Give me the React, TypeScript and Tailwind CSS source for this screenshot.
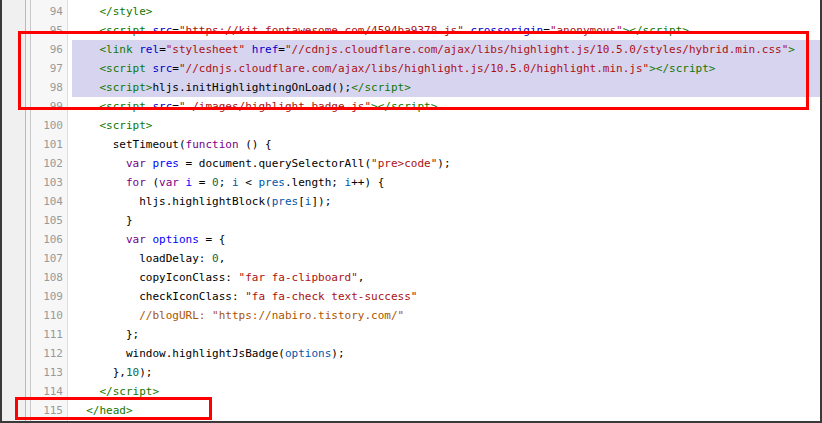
import React from 'react'

type Seg = [string, string]

const TAG = 'text-[#117700]'
const ATT = 'text-[#0000cc]'
const STR = 'text-[#aa1111]'
const KW = 'text-[#770088]'
const DEF = 'text-[#0000ff]'
const V2 = 'text-[#0055aa]'
const NUM = 'text-[#116644]'
const COM = 'text-[#aa5500]'
const TXT = 'text-[#000000]'

const lines: { no: number, segs: Seg[], selected?: boolean }[] = [
    { no: 94, segs: [[TXT, '    '], [TAG, '</style>']] },
    {
        no: 95, segs: [
            [TXT, '    '], [TAG, '<script '], [ATT, 'src'], [TXT, '='],
            [STR, '"https://kit.fontawesome.com/4594ba9378.js"'], [TXT, ' '],
            [ATT, 'crossorigin'], [TXT, '='], [STR, '"anonymous"'], [TAG, '></script>'],
        ]
    },
    {
        no: 96, selected: true, segs: [
            [TXT, '    '], [TAG, '<link '], [ATT, 'rel'], [TXT, '='], [STR, '"stylesheet"'], [TXT, ' '],
            [ATT, 'href'], [TXT, '='],
            [STR, '"//cdnjs.cloudflare.com/ajax/libs/highlight.js/10.5.0/styles/hybrid.min.css"'], [TAG, '>'],
        ]
    },
    {
        no: 97, selected: true, segs: [
            [TXT, '    '], [TAG, '<script '], [ATT, 'src'], [TXT, '='],
            [STR, '"//cdnjs.cloudflare.com/ajax/libs/highlight.js/10.5.0/highlight.min.js"'], [TAG, '></script>'],
        ]
    },
    {
        no: 98, selected: true, segs: [
            [TXT, '    '], [TAG, '<script>'], [TXT, 'hljs.initHighlightingOnLoad();'], [TAG, '</script>'],
        ]
    },
    {
        no: 99, segs: [
            [TXT, '    '], [TAG, '<script '], [ATT, 'src'], [TXT, '='],
            [STR, '"./images/highlight.badge.js"'], [TAG, '></script>'],
        ]
    },
    { no: 100, segs: [[TXT, '    '], [TAG, '<script>']] },
    { no: 101, segs: [[TXT, '      setTimeout('], [KW, 'function'], [TXT, ' () {']] },
    {
        no: 102, segs: [
            [TXT, '        '], [KW, 'var'], [TXT, ' '], [DEF, 'pres'], [TXT, ' = document.querySelectorAll('],
            [STR, '"pre>code"'], [TXT, ');'],
        ]
    },
    {
        no: 103, segs: [
            [TXT, '        '], [KW, 'for'], [TXT, ' ('], [KW, 'var'], [TXT, ' '], [DEF, 'i'], [TXT, ' = '],
            [NUM, '0'], [TXT, '; '], [V2, 'i'], [TXT, ' < '], [V2, 'pres'], [TXT, '.length; '], [V2, 'i'],
            [TXT, '++) {'],
        ]
    },
    {
        no: 104, segs: [
            [TXT, '          hljs.highlightBlock('], [V2, 'pres'], [TXT, '['], [V2, 'i'], [TXT, ']);'],
        ]
    },
    { no: 105, segs: [[TXT, '        }']] },
    { no: 106, segs: [[TXT, '        '], [KW, 'var'], [TXT, ' '], [DEF, 'options'], [TXT, ' = {']] },
    { no: 107, segs: [[TXT, '          loadDelay: '], [NUM, '0'], [TXT, ',']] },
    { no: 108, segs: [[TXT, '          copyIconClass: '], [STR, '"far fa-clipboard"'], [TXT, ',']] },
    { no: 109, segs: [[TXT, '          checkIconClass: '], [STR, '"fa fa-check text-success"']] },
    { no: 110, segs: [[TXT, '          '], [COM, '//blogURL: "https://nabiro.tistory.com/"']] },
    { no: 111, segs: [[TXT, '        };']] },
    { no: 112, segs: [[TXT, '        window.highlightJsBadge('], [V2, 'options'], [TXT, ');']] },
    { no: 113, segs: [[TXT, '      },'], [NUM, '10'], [TXT, ');']] },
    { no: 114, segs: [[TXT, '    '], [TAG, '</script>']] },
    { no: 115, segs: [[TXT, '  '], [TAG, '</head>']] },
]

export default function App() {
    return (
        <div className="relative flex w-[822px] h-[423px] overflow-hidden bg-white border-l-2 border-r-2 border-b-2 border-[#3a3a3a] font-['DejaVu_Sans_Mono',monospace] text-[11px]">
            <div className="w-[24px] shrink-0 bg-[#f0f0f0] border-r border-[#b8b8b8]" />
            <div className="w-[5px] shrink-0 bg-[#f4f4f4] border-r border-[#c8c8c8]" />
            <div className="w-[37px] shrink-0 bg-[#f7f7f7] border-r border-[#dddddd] pt-[2px]">
                {lines.map(line => (
                    <div key={line.no} className="h-[19px] leading-[19px] text-right pr-[4px] text-[#999999]">
                        {line.no}
                    </div>
                ))}
            </div>
            <div className="flex-1 pl-[4px] pt-[2px]">
                {lines.map(line => (
                    <div
                        key={line.no}
                        className={`h-[19px] leading-[19px] whitespace-pre pl-[1px] ${line.selected ? 'bg-[#d7d4f0]' : ''}`}
                    >
                        {line.segs.map(([cls, text], i) => (
                            <span key={i} className={cls}>{text}</span>
                        ))}
                    </div>
                ))}
            </div>

            {/* annotation boxes */}
            <div className="absolute left-[16px] top-[31px] w-[791px] h-[79px] border-[3px] border-[#ff0000]" />
            <div className="absolute left-[13px] top-[397px] w-[197px] h-[23px] border-[3px] border-[#ff0000]" />
        </div>
    )
}
